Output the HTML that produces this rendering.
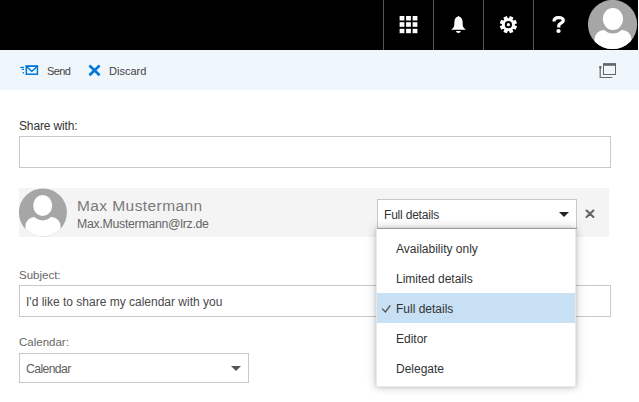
<!DOCTYPE html>
<html><head><meta charset="utf-8">
<style>
*{box-sizing:border-box;margin:0;padding:0}
html,body{width:639px;height:402px;overflow:hidden;background:#fff;font-family:"Liberation Sans",sans-serif;color:#333}
.a{position:absolute}
.t{position:absolute;white-space:nowrap;line-height:1}
#top{left:0;top:0;width:638px;height:50px;background:#000}
.sep{position:absolute;top:0;width:1px;height:50px;background:#555}
#tb{left:0;top:50px;width:639px;height:40px;background:#eff6fc}
.box{position:absolute;border:1px solid #c8c8c8;background:#fff}
</style></head><body>
<div id="top" class="a">
  <div class="sep" style="left:383px"></div>
  <div class="sep" style="left:433px"></div>
  <div class="sep" style="left:483px"></div>
  <div class="sep" style="left:533px"></div>
  <!-- grid -->
  <svg class="a" style="left:399px;top:16px" width="20" height="18" viewBox="0 0 20 18">
    <g fill="#fff">
      <rect x="0.6" y="0" width="4.8" height="4.5"/><rect x="7.1" y="0" width="4.8" height="4.5"/><rect x="13.6" y="0" width="4.8" height="4.5"/>
      <rect x="0.6" y="6.2" width="4.8" height="4.6"/><rect x="7.1" y="6.2" width="4.8" height="4.6"/><rect x="13.6" y="6.2" width="4.8" height="4.6"/>
      <rect x="0.6" y="12.8" width="4.8" height="4.4"/><rect x="7.1" y="12.8" width="4.8" height="4.4"/><rect x="13.6" y="12.8" width="4.8" height="4.4"/>
    </g>
  </svg>
  <!-- bell -->
  <svg class="a" style="left:450px;top:15px" width="17" height="19" viewBox="0 0 17 19">
    <path fill="#fff" d="M8.5 0.9 C9 0.9 9.2 1.4 9.4 1.7 C11.2 2.2 12.3 3.6 12.5 6 L12.8 10.5 C13 12.4 14.3 13.6 15.7 14.4 L15.7 14.7 L1.3 14.7 L1.3 14.4 C2.7 13.6 4 12.4 4.2 10.5 L4.5 6 C4.7 3.6 5.8 2.2 7.6 1.7 C7.8 1.4 8 0.9 8.5 0.9 Z"/>
    <path fill="#fff" d="M5.9 16 L10.9 16 C10.5 17.3 9.6 18 8.4 18 C7.2 18 6.3 17.3 5.9 16 Z"/>
  </svg>
  <!-- gear -->
  <svg class="a" style="left:499px;top:15px" width="19" height="19" viewBox="-9.5 -9.5 19 19">
    <g fill="#fff" transform="translate(-0.1,0.2) rotate(22.5)">
      <circle r="6.4"/>
      <rect x="-1.9" y="-8.6" width="3.8" height="4"/>
      <rect x="-1.9" y="-8.6" width="3.8" height="4" transform="rotate(45)"/>
      <rect x="-1.9" y="-8.6" width="3.8" height="4" transform="rotate(90)"/>
      <rect x="-1.9" y="-8.6" width="3.8" height="4" transform="rotate(135)"/>
      <rect x="-1.9" y="-8.6" width="3.8" height="4" transform="rotate(180)"/>
      <rect x="-1.9" y="-8.6" width="3.8" height="4" transform="rotate(225)"/>
      <rect x="-1.9" y="-8.6" width="3.8" height="4" transform="rotate(270)"/>
      <rect x="-1.9" y="-8.6" width="3.8" height="4" transform="rotate(315)"/>
    </g>
    <circle cx="-0.1" cy="0.2" r="2.6" fill="none" stroke="#000" stroke-width="2"/>
  </svg>
  <!-- help -->
  <svg class="a" style="left:550px;top:14px" width="17" height="20" viewBox="0 0 17 20">
    <path d="M4 7.6 C4 5 6 3.7 8.5 3.7 C11.3 3.7 13.3 4.6 13.3 6.7 C13.3 8.9 8.8 9.2 8.8 11.5 L8.8 13.4" fill="none" stroke="#fff" stroke-width="3.2"/>
    <ellipse cx="8.5" cy="16.9" rx="2.2" ry="2" fill="#fff"/>
  </svg>
  <!-- avatar -->
  <svg class="a" style="left:588px;top:0px" width="50" height="50" viewBox="0 0 50 50">
    <defs><clipPath id="c1"><circle cx="24.55" cy="24.5" r="24.6"/></clipPath></defs>
    <circle cx="24.55" cy="24.5" r="24.6" fill="#a6a6a6"/>
    <g clip-path="url(#c1)">
      <rect x="6.5" y="30" width="37" height="30" rx="9.5" fill="#fff"/>
      <ellipse cx="24.95" cy="19" rx="13.4" ry="14.6" fill="#a6a6a6"/>
      <ellipse cx="24.95" cy="19" rx="10.15" ry="10.9" fill="#fff"/>
    </g>
  </svg>
</div>

<div id="tb" class="a">
  <svg class="a" style="left:18px;top:12px" width="24" height="16" viewBox="0 0 24 16">
    <g fill="#0078d7">
      <rect x="2.2" y="4.8" width="3.8" height="1.2"/>
      <rect x="3.6" y="6.8" width="2.4" height="1.2"/>
      <rect x="4.6" y="10.1" width="1.4" height="1.4"/>
    </g>
    <rect x="8.3" y="4.2" width="11.1" height="8" fill="none" stroke="#0078d7" stroke-width="1.5"/><rect x="7.6" y="3.4" width="12.5" height="1.4" fill="#0078d7"/>
    <path d="M8.8 4.8 L13.85 9.2 L18.9 4.8" fill="none" stroke="#0078d7" stroke-width="1.5"/>
  </svg>
  <div class="t" style="left:47px;top:16px;font-size:11px;letter-spacing:-0.6px;color:#444">Send</div>
  <svg class="a" style="left:86px;top:12px" width="18" height="16" viewBox="0 0 18 16">
    <path d="M3.4 3.5 L13.6 13.3 M13.6 3.5 L3.4 13.3" stroke="#0078d7" stroke-width="2.6"/>
  </svg>
  <div class="t" style="left:109px;top:16px;font-size:11px;color:#444">Discard</div>
  <!-- popout -->
  <svg class="a" style="left:599px;top:13px" width="18" height="16" viewBox="0 0 18 16">
    <rect x="4.5" y="1" width="12" height="10.5" fill="none" stroke="#666" stroke-width="1"/>
    <rect x="4" y="0.2" width="13" height="2.6" fill="#666"/>
    <path d="M1.2 3 L1.2 14.5 L13.2 14.5" fill="none" stroke="#666" stroke-width="1.2"/>
    <rect x="0.4" y="3" width="2" height="2.6" fill="#666"/>
  </svg>
</div>

<div class="t" style="left:19px;top:120px;font-size:12px;letter-spacing:-0.15px">Share with:</div>
<div class="box" style="left:19px;top:136px;width:592px;height:32px"></div>

<!-- person row -->
<div class="a" style="left:19px;top:188px;width:590px;height:49px;background:#f4f4f4"></div>
<svg class="a" style="left:19px;top:188px" width="48" height="49" viewBox="0 0 48 49">
  <defs><clipPath id="c2"><circle cx="23.9" cy="24.5" r="24"/></clipPath></defs>
  <circle cx="23.9" cy="24.5" r="24" fill="#a6a6a6"/>
  <g clip-path="url(#c2)">
    <rect x="6.5" y="29" width="35" height="30" rx="9" fill="#fff"/>
    <ellipse cx="23.7" cy="17.5" rx="12.8" ry="15" fill="#a6a6a6"/>
    <ellipse cx="23.7" cy="17.5" rx="9.5" ry="10.5" fill="#fff"/>
  </g>
</svg>
<div class="t" style="left:77px;top:197.5px;font-size:15.5px;letter-spacing:0.42px;color:#7a7a7a">Max Mustermann</div>
<div class="t" style="left:77px;top:218px;font-size:12.3px;letter-spacing:-0.28px;color:#666">Max.Mustermann@lrz.de</div>

<div class="box" style="left:377px;top:199px;width:200px;height:30px;border-color:#c8c8c8 #c8c8c8 #999 #c8c8c8"></div>
<div class="t" style="left:384px;top:209px;font-size:12px;letter-spacing:-0.2px">Full details</div>
<svg class="a" style="left:559px;top:212px" width="10" height="5" viewBox="0 0 10 5"><path d="M0 0 L10 0 L5 5 Z" fill="#222"/></svg>
<svg class="a" style="left:585px;top:209px" width="10" height="9" viewBox="0 0 10 9"><path d="M1.6 1.6 L8.4 8.1 M8.4 1.6 L1.6 8.1" stroke="#666" stroke-width="2.1" stroke-linecap="round"/></svg>

<div class="t" style="left:19px;top:270px;font-size:11.5px;color:#666">Subject:</div>
<div class="box" style="left:19px;top:285px;width:592px;height:32px"></div>
<div class="t" style="left:26px;top:296px;font-size:12px;color:#4a4a4a">I'd like to share my calendar with you</div>

<div class="t" style="left:19px;top:337px;font-size:11.5px;color:#666">Calendar:</div>
<div class="box" style="left:19px;top:353px;width:230px;height:30px"></div>
<div class="t" style="left:26px;top:363px;font-size:12.2px;letter-spacing:-0.6px;color:#606060">Calendar</div>
<svg class="a" style="left:231px;top:366px" width="10" height="5" viewBox="0 0 10 5"><path d="M0 0 L10 0 L5 5 Z" fill="#555"/></svg>

<!-- popup -->
<div class="a" style="left:376px;top:228px;width:200px;height:159px;border:1px solid #e8e8e8;background:#fff;box-shadow:0 0 3px rgba(0,0,0,0.12),0 0 9px rgba(0,0,0,0.24)">
  <div class="t" style="left:19px;top:14px;font-size:12px">Availability only</div>
  <div class="t" style="left:19px;top:44px;font-size:12px">Limited details</div>
  <div class="a" style="left:0;top:64px;width:100%;height:30px;background:#c7e0f4"></div>
  <svg class="a" style="left:4px;top:75px" width="10" height="9" viewBox="0 0 10 9"><path d="M1.1 4.6 L4.4 8 L9.3 1.3" fill="none" stroke="#555" stroke-width="1.35"/></svg>
  <div class="t" style="left:19px;top:74px;font-size:12px">Full details</div>
  <div class="t" style="left:19px;top:104px;font-size:12px">Editor</div>
  <div class="t" style="left:19px;top:134px;font-size:12px">Delegate</div>
</div>
<div class="a" style="left:638px;top:0;width:1px;height:50px;background:#fff"></div>
<div class="a" style="left:377px;top:228px;width:200px;height:1px;background:#999"></div>
</body></html>
